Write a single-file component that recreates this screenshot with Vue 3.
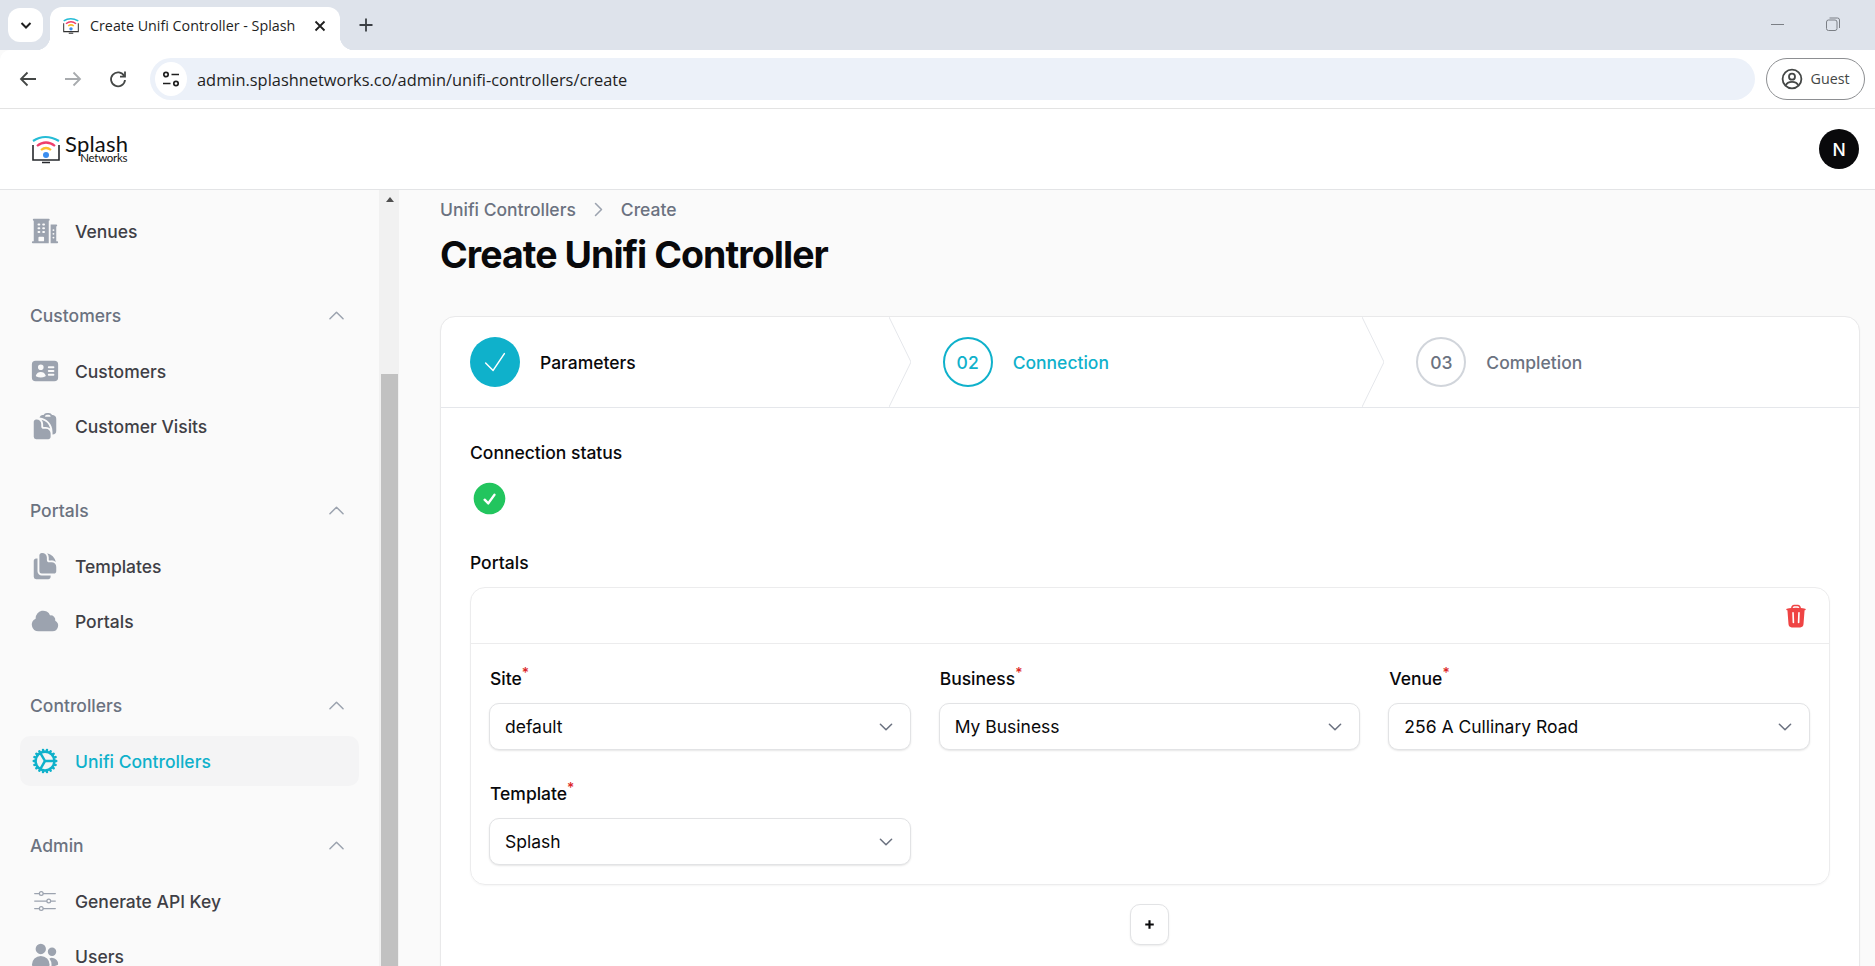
<script setup>
const groups = [
  { items: [{ label: 'Venues', solid: true, d: 'M3 2.25a.75.75 0 0 0 0 1.5v16.5h-.75a.75.75 0 0 0 0 1.5H15v-18a.75.75 0 0 0 0-1.5H3ZM6.75 19.5v-2.25a.75.75 0 0 1 .75-.75h3a.75.75 0 0 1 .75.75v2.25a.75.75 0 0 1-.75.75h-3a.75.75 0 0 1-.75-.75ZM6 6.75A.75.75 0 0 1 6.75 6h.75a.75.75 0 0 1 0 1.5h-.75A.75.75 0 0 1 6 6.75ZM6.75 9a.75.75 0 0 0 0 1.5h.75a.75.75 0 0 0 0-1.5h-.75ZM6 12.75a.75.75 0 0 1 .75-.75h.75a.75.75 0 0 1 0 1.5h-.75a.75.75 0 0 1-.75-.75ZM10.5 6a.75.75 0 0 0 0 1.5h.75a.75.75 0 0 0 0-1.5h-.75Zm-.75 3.75A.75.75 0 0 1 10.5 9h.75a.75.75 0 0 1 0 1.5h-.75a.75.75 0 0 1-.75-.75ZM10.5 12a.75.75 0 0 0 0 1.5h.75a.75.75 0 0 0 0-1.5h-.75ZM16.5 6.75v15h5.25a.75.75 0 0 0 0-1.5H21v-12a.75.75 0 0 0 0-1.5h-4.5Zm1.5 4.5a.75.75 0 0 1 .75-.75h.008a.75.75 0 0 1 .75.75v.008a.75.75 0 0 1-.75.75h-.008a.75.75 0 0 1-.75-.75v-.008Zm.75 2.25a.75.75 0 0 0-.75.75v.008c0 .414.336.75.75.75h.008a.75.75 0 0 0 .75-.75v-.008a.75.75 0 0 0-.75-.75h-.008ZM18 17.25a.75.75 0 0 1 .75-.75h.008a.75.75 0 0 1 .75.75v.008a.75.75 0 0 1-.75.75h-.008a.75.75 0 0 1-.75-.75v-.008Z' }] },
  { title: 'Customers', items: [
    { label: 'Customers', solid: true, d: 'M4.5 3.75a3 3 0 0 0-3 3v10.5a3 3 0 0 0 3 3h15a3 3 0 0 0 3-3V6.75a3 3 0 0 0-3-3h-15Zm4.125 3a2.25 2.25 0 1 0 0 4.5 2.25 2.25 0 0 0 0-4.5Zm-3.873 8.703a4.126 4.126 0 0 1 7.746 0 .75.75 0 0 1-.351.92 7.47 7.47 0 0 1-3.522.877 7.47 7.47 0 0 1-3.522-.877.75.75 0 0 1-.351-.92ZM15 8.25a.75.75 0 0 0 0 1.5h3.75a.75.75 0 0 0 0-1.5H15ZM14.25 12a.75.75 0 0 1 .75-.75h3.75a.75.75 0 0 1 0 1.5H15a.75.75 0 0 1-.75-.75Zm.75 2.25a.75.75 0 0 0 0 1.5h3.75a.75.75 0 0 0 0-1.5H15Z' },
    { label: 'Customer Visits', solid: true, d: 'M17.663 3.118c.225.015.45.032.673.05C19.876 3.298 21 4.604 21 6.109v9.642a3 3 0 0 1-3 3V16.5c0-5.922-4.576-10.775-10.384-11.217.324-1.132 1.3-2.01 2.548-2.114.224-.019.448-.036.673-.051A3 3 0 0 1 13.5 1.5H15a3 3 0 0 1 2.663 1.618ZM12 4.5A1.5 1.5 0 0 1 13.5 3H15a1.5 1.5 0 0 1 1.5 1.5H12ZM3 8.625c0-1.036.84-1.875 1.875-1.875h.375A3.75 3.75 0 0 1 9 10.5v1.875c0 1.036.84 1.875 1.875 1.875h1.875A3.75 3.75 0 0 1 16.5 18v2.625c0 1.035-.84 1.875-1.875 1.875h-9.75A1.875 1.875 0 0 1 3 20.625v-12ZM10.5 10.5a5.23 5.23 0 0 0-1.279-3.434 9.768 9.768 0 0 1 6.963 6.963 5.23 5.23 0 0 0-3.434-1.279h-1.875a.375.375 0 0 1-.375-.375V10.5Z' }
  ] },
  { title: 'Portals', items: [
    { label: 'Templates', solid: true, d: 'M7.5 3.375c0-1.036.84-1.875 1.875-1.875h.375a3.75 3.75 0 0 1 3.75 3.75v1.875C13.5 8.161 14.34 9 15.375 9h1.875A3.75 3.75 0 0 1 21 12.75v3.375C21 17.16 20.16 18 19.125 18h-9.75A1.875 1.875 0 0 1 7.5 16.125V3.375ZM15 5.25a5.23 5.23 0 0 0-1.279-3.434 9.768 9.768 0 0 1 6.963 6.963A5.23 5.23 0 0 0 17.25 7.5h-1.875A.375.375 0 0 1 15 7.125V5.25ZM4.875 6H6v10.125A3.375 3.375 0 0 0 9.375 19.5H16.5v1.125c0 1.035-.84 1.875-1.875 1.875h-9.75A1.875 1.875 0 0 1 3 20.625V7.875C3 6.839 3.84 6 4.875 6Z' },
    { label: 'Portals', solid: true, d: 'M4.5 9.75a6 6 0 0 1 11.573-2.226 3.75 3.75 0 0 1 4.133 4.303A4.5 4.5 0 0 1 18 20.25H6.75a5.25 5.25 0 0 1-2.23-10.004 6.072 6.072 0 0 1-.02-.496Z' }
  ] },
  { title: 'Controllers', items: [
    { label: 'Unifi Controllers', active: true, d: 'M4.5 12a7.5 7.5 0 0 0 15 0m-15 0a7.5 7.5 0 1 1 15 0m-15 0H3m16.5 0H21m-1.5 0H12m-8.457 3.077 1.41-.513m14.095-5.13 1.41-.513M5.106 17.785l1.15-.964m11.49-9.642 1.149-.964M7.501 19.795l.75-1.3m7.5-12.99.75-1.3m-6.063 16.658.26-1.477m2.605-14.772.26-1.477m0 17.726-.26-1.477M10.698 4.614l-.26-1.477M16.5 19.794l-.75-1.299M7.5 4.205 12 12m6.894 5.785-1.149-.964M6.256 7.178l-1.15-.964m15.352 8.864-1.41-.513M4.954 9.435l-1.41-.514M12.002 12l-3.75 6.495' }
  ] },
  { title: 'Admin', items: [
    { label: 'Generate API Key', thin: true, d: 'M10.5 6h9.75M10.5 6a1.5 1.5 0 1 1-3 0m3 0a1.5 1.5 0 1 0-3 0M3.75 6H7.5m3 12h9.75m-9.75 0a1.5 1.5 0 0 1-3 0m3 0a1.5 1.5 0 0 0-3 0m-3.75 0H7.5m9-6h3.75m-3.75 0a1.5 1.5 0 0 1-3 0m3 0a1.5 1.5 0 0 0-3 0m-9.75 0h9.75' },
    { label: 'Users', solid: true, d: 'M4.5 6.375a4.125 4.125 0 1 1 8.25 0 4.125 4.125 0 0 1-8.25 0ZM14.25 8.625a3.375 3.375 0 1 1 6.75 0 3.375 3.375 0 0 1-6.75 0ZM1.5 19.125a7.125 7.125 0 0 1 14.25 0v.003l-.001.119a.75.75 0 0 1-.363.63 13.067 13.067 0 0 1-6.761 1.873c-2.472 0-4.786-.684-6.76-1.873a.75.75 0 0 1-.364-.63l-.001-.122ZM17.25 19.128l-.001.144a2.25 2.25 0 0 1-.233.96 10.088 10.088 0 0 0 5.06-1.01.75.75 0 0 0 .42-.643 4.875 4.875 0 0 0-6.957-4.611 8.586 8.586 0 0 1 1.71 5.157v.003Z' }
  ] }
]
const topFields = [
  { label: 'Site', value: 'default' },
  { label: 'Business', value: 'My Business' },
  { label: 'Venue', value: '256 A Cullinary Road' },
  { label: 'Template', value: 'Splash' }
]
</script>

<template>
  <div class="window">
    <div class="tabstrip">
      <div class="tab-list-btn">
        <svg width="16" height="16" viewBox="0 0 16 16" fill="none" stroke="#1f1f1f" stroke-width="2"><path d="M3.5 6 8 10.5 12.5 6" /></svg>
      </div>
      <div class="tab">
        <svg class="favicon" width="18" height="18" viewBox="0 0 32 32" fill="none">
          <path d="M3 7Q15-1 29 7" stroke="#25bcd6" stroke-width="2.6" />
          <path d="M7 12Q16 5 25 12" stroke="#ef3f6b" stroke-width="2.6" />
          <path d="M11 16Q16 12 21 16" stroke="#fbc02d" stroke-width="2.6" />
          <circle cx="16" cy="21" r="3" fill="#3b8ef0" />
          <path d="M3 11V26H29V11M12 29H20" stroke="#333" stroke-width="1.8" />
        </svg>
        <span class="tab-title">Create Unifi Controller - Splash</span>
        <svg class="tab-close" width="12" height="12" viewBox="0 0 12 12" stroke="#1f1f1f" stroke-width="1.8"><path d="M1.5 1.5l9 9M10.5 1.5l-9 9" /></svg>
      </div>
      <svg class="new-tab" width="16" height="16" viewBox="0 0 16 16" stroke="#3b3f44" stroke-width="1.8"><path d="M8 1.5v13M1.5 8h13" /></svg>
      <div class="win-controls">
        <svg width="13" height="13" viewBox="0 0 13 13" stroke="#7b7f85"><path d="M0 6.5h13" /></svg>
        <svg width="14" height="14" viewBox="0 0 14 14" fill="none" stroke="#7b7f85"><rect x=".5" y="3" width="10.5" height="10.5" rx="2" /><path d="M3.5 1h8a2 2 0 0 1 2 2v8" /></svg>
      </div>
    </div>

    <div class="toolbar">
      <div class="nav-btn">
        <svg width="20" height="20" viewBox="0 0 20 20" fill="none" stroke="#444746" stroke-width="1.8"><path d="M18 10H3M9.5 3.5 3 10l6.5 6.5" /></svg>
      </div>
      <div class="nav-btn">
        <svg width="20" height="20" viewBox="0 0 20 20" fill="none" stroke="#a8abae" stroke-width="1.8"><path d="M2 10h15M10.5 3.5 17 10l-6.5 6.5" /></svg>
      </div>
      <div class="nav-btn">
        <svg width="20" height="20" viewBox="0 0 20 20" fill="none" stroke="#444746" stroke-width="1.8"><path d="M16.2 7A7 7 0 1 0 17 11" /><path d="M17 2.5V7.6H12" /></svg>
      </div>
      <div class="omnibox">
        <div class="site-info">
          <svg width="20" height="20" viewBox="0 0 20 20" fill="none" stroke="#1f1f1f" stroke-width="1.7"><circle cx="5" cy="5.5" r="2.2" /><path d="M10.5 5.5H18M2 14.5h7.5" /><circle cx="15" cy="14.5" r="2.2" /></svg>
        </div>
        <span class="url">admin.splashnetworks.co/admin/unifi-controllers/create</span>
      </div>
      <div class="guest">
        <svg width="22" height="22" viewBox="0 0 22 22" fill="none" stroke="#444746" stroke-width="1.8"><circle cx="11" cy="11" r="9.4" /><circle cx="11" cy="8.7" r="3" /><path d="M4.8 17.4c1-2.6 3.3-3.5 6.2-3.5s5.2.9 6.2 3.5" /></svg>
        <span class="guest-text">Guest</span>
      </div>
    </div>

    <header class="app-header">
      <div class="logo">
        <svg width="32" height="32" viewBox="0 0 32 32" fill="none">
          <path d="M3 7Q15-1 29 7" stroke="#25bcd6" stroke-width="2.2" />
          <path d="M7 12Q16 5 25 12" stroke="#ef3f6b" stroke-width="2.2" />
          <path d="M11 16Q16 12 21 16" stroke="#fbc02d" stroke-width="2.2" />
          <circle cx="16" cy="21" r="3" fill="#3b8ef0" />
          <path d="M3 11V26H29V11M12 28.5H20" stroke="#26282c" stroke-width="1.6" />
        </svg>
        <div class="logo-text">
          <span class="logo-main">Splash</span>
          <span class="logo-sub">Networks</span>
        </div>
      </div>
      <div class="avatar">N</div>
    </header>

    <div class="body">
      <aside class="sidebar">
        <nav class="nav">
          <section v-for="(group, g) in groups" :key="g" class="nav-group">
            <div v-if="group.title" class="group-head">
              <span>{{ group.title }}</span>
              <svg width="21" height="21" viewBox="0 0 24 24" fill="none" stroke="#9ca3af" stroke-width="1.7" stroke-linecap="round" stroke-linejoin="round"><path d="m4.5 15.75 7.5-7.5 7.5 7.5" /></svg>
            </div>
            <a v-for="item in group.items" :key="item.label" class="nav-item" :class="{ active: item.active }">
              <svg v-if="item.solid" class="nav-icon" viewBox="0 0 24 24" fill="#9ca3af"><path fill-rule="evenodd" clip-rule="evenodd" :d="item.d" /></svg>
              <svg v-else class="nav-icon" viewBox="0 0 24 24" fill="none" stroke-linecap="round" stroke-linejoin="round" :stroke="item.active ? '#0fb1cb' : '#9ca3af'" :stroke-width="item.thin ? 1 : 2"><path :d="item.d" /></svg>
              <span>{{ item.label }}</span>
            </a>
          </section>
        </nav>
      </aside>
      <div class="scrollbar">
        <div class="scroll-arrow"></div>
        <div class="scroll-thumb"></div>
      </div>

      <main class="main">
        <div class="crumbs">
          <span>Unifi Controllers</span>
          <svg width="19" height="19" viewBox="0 0 24 24" fill="none" stroke="#9ca3af" stroke-width="2" stroke-linecap="round" stroke-linejoin="round"><path d="m8.25 4.5 7.5 7.5-7.5 7.5" /></svg>
          <span>Create</span>
        </div>
        <h1 class="title">Create Unifi Controller</h1>

        <div class="card">
          <div class="steps">
            <div class="step done">
              <div class="circle">
                <svg width="30" height="30" viewBox="0 0 24 24" fill="none" stroke="#fff" stroke-width="1.2" stroke-linecap="round" stroke-linejoin="round"><path d="m4.5 12.75 6 6 9-13.5" /></svg>
              </div>
              <span>Parameters</span>
              <svg class="sep" width="22" height="90" viewBox="0 0 22 90" fill="none" stroke="#e5e7eb"><path d="M0 0 22 45 0 90" /></svg>
            </div>
            <div class="step current">
              <div class="circle">02</div>
              <span>Connection</span>
              <svg class="sep" width="22" height="90" viewBox="0 0 22 90" fill="none" stroke="#e5e7eb"><path d="M0 0 22 45 0 90" /></svg>
            </div>
            <div class="step todo">
              <div class="circle">03</div>
              <span>Completion</span>
            </div>
          </div>

          <div class="card-body">
            <div class="label">Connection status</div>
            <svg class="status-icon" viewBox="0 0 24 24" fill="#22c55e"><path fill-rule="evenodd" clip-rule="evenodd" d="M2.25 12c0-5.385 4.365-9.75 9.75-9.75s9.75 4.365 9.75 9.75-4.365 9.75-9.75 9.75S2.25 17.385 2.25 12Zm13.36-1.814a.75.75 0 1 0-1.22-.872l-3.236 4.53L9.53 12.22a.75.75 0 0 0-1.06 1.06l2.25 2.25a.75.75 0 0 0 1.14-.094l3.75-5.25Z" /></svg>
            <div class="label">Portals</div>

            <div class="portal">
              <div class="portal-head">
                <svg width="26" height="26" viewBox="0 0 24 24" fill="#ef4444"><path fill-rule="evenodd" clip-rule="evenodd" d="M16.5 4.478v.227a48.816 48.816 0 0 1 3.878.512.75.75 0 1 1-.256 1.478l-.209-.035-1.005 13.07a3 3 0 0 1-2.991 2.77H8.084a3 3 0 0 1-2.991-2.77L4.087 6.66l-.209.035a.75.75 0 0 1-.256-1.478A48.567 48.567 0 0 1 7.5 4.705v-.227c0-1.564 1.213-2.9 2.816-2.951a52.662 52.662 0 0 1 3.369 0c1.603.051 2.815 1.387 2.815 2.951Zm-6.136-1.452a51.196 51.196 0 0 1 3.273 0C14.39 3.05 15 3.684 15 4.478v.113a49.488 49.488 0 0 0-6 0v-.113c0-.794.609-1.428 1.364-1.452Zm-.355 5.945a.75.75 0 1 0-1.5.058l.347 9a.75.75 0 1 0 1.499-.058l-.346-9Zm5.48.058a.75.75 0 1 0-1.498-.058l-.347 9a.75.75 0 0 0 1.5.058l.345-9Z" /></svg>
              </div>
              <div class="portal-grid">
                <div v-for="f in topFields" :key="f.label" class="field">
                  <div class="label field-label">{{ f.label }}<sup class="req">*</sup></div>
                  <div class="select">
                    <span>{{ f.value }}</span>
                    <svg width="28" height="28" viewBox="0 0 20 20" fill="none" stroke="#6b7280" stroke-width="1.1" stroke-linecap="round" stroke-linejoin="round"><path d="m6 8 4 4 4-4" /></svg>
                  </div>
                </div>
              </div>
            </div>

            <div class="add-row">
              <button class="add" type="button">
                <svg width="17" height="17" viewBox="0 0 24 24" fill="none" stroke="#09090b" stroke-width="3"><path d="M12 6v12M6 12h12" /></svg>
              </button>
            </div>
          </div>
        </div>
      </main>
    </div>
  </div>
</template>

<style>
html, body { margin: 0; overflow: hidden; }
</style>

<style scoped>
.window { height: 966px; width: 1875px; display: flex; flex-direction: column; overflow: hidden; background: #fafafa; font-family: Inter, "Liberation Sans", sans-serif; font-size: 17.5px; color: #09090b; }

.tabstrip { height: 50px; flex: none; display: flex; align-items: center; background: #dee3eb; padding-left: 8px; box-sizing: border-box; }
.tab-list-btn { position: relative; z-index: 1; width: 35px; height: 34px; background: #fff; border-radius: 12px; display: flex; align-items: center; justify-content: center; margin-top: -1px; }
.tab { position: relative; align-self: flex-end; margin-left: 7px; width: 290px; height: 43px; background: #fff; border-radius: 12px 12px 0 0; display: flex; align-items: center; box-sizing: border-box; padding: 0 14px 0 12px; }
.tab::before, .tab::after { content: ""; position: absolute; bottom: 0; width: 14px; height: 14px; }
.tab::before { left: -14px; background: radial-gradient(circle at 0 0, #dee3eb 14px, #fff 14.5px); }
.tab::after { right: -14px; background: radial-gradient(circle at 100% 0, #dee3eb 14px, #fff 14.5px); }
.favicon { flex: none; margin-top: -6px; }
.tab-title { margin-left: 10px; font: 14.3px "Open Sans", "Noto Sans", sans-serif; color: #1f1f1f; white-space: nowrap; flex: 1; margin-top: -6px; }
.tab-close { flex: none; margin-top: -6px; }
.new-tab { margin-left: 18px; flex: none; }
.win-controls { margin-left: auto; padding-right: 35px; display: flex; gap: 42px; align-items: center; margin-top: -2px; }

.toolbar { height: 59px; flex: none; box-sizing: border-box; background: #fff; border-bottom: 1px solid #e3e3e3; border-top-left-radius: 10px; display: flex; align-items: center; padding: 0 10px 0 5px; }
.nav-btn { width: 45px; display: flex; justify-content: center; flex: none; }
.omnibox { flex: 1; margin-left: 10px; height: 42px; background: #ecf1f9; border-radius: 21px; display: flex; align-items: center; padding-left: 5px; }
.site-info { width: 32px; height: 34px; border-radius: 50%; background: #fff; display: flex; align-items: center; justify-content: center; }
.url { margin: 1px 0 0 10px; font: 16.4px "Open Sans", "Noto Sans", sans-serif; color: #1f1f1f; white-space: nowrap; }
.guest { margin-left: 11px; width: 99px; height: 42px; box-sizing: border-box; border: 1px solid #8d8f92; border-radius: 21px; display: flex; align-items: center; padding-left: 14px; gap: 7.5px; font: 14.3px "Open Sans", "Noto Sans", sans-serif; color: #444746; }
.guest-text { margin-top: -2px; }

.app-header { height: 81px; flex: none; box-sizing: border-box; background: #fff; border-bottom: 1px solid #e3e4e6; display: flex; align-items: center; justify-content: space-between; padding: 0 16px 0 30px; }
.logo { display: flex; align-items: center; gap: 2px; margin-top: 1px; }
.logo-text { display: flex; flex-direction: column; align-items: flex-end; margin: -3px 0 0 1px; color: #111; font-family: Lato, sans-serif; }
.logo-main { font-size: 22px; line-height: 19px; letter-spacing: 0.2px; }
.logo-sub { font-size: 11.5px; line-height: 9px; margin-top: 0; margin-right: 1px; letter-spacing: -0.3px; }
.avatar { width: 40px; height: 40px; border-radius: 50%; background: #09090b; color: #fff; display: flex; align-items: center; justify-content: center; font-size: 17.5px; font-weight: 450; }

.body { flex: 1; min-height: 0; display: flex; overflow: hidden; }
.sidebar { width: 379px; flex: none; box-sizing: border-box; padding: 16px 20px 0; overflow: hidden; background: #fafafa; }
.nav { display: flex; flex-direction: column; gap: 44px; }
.nav-group { display: flex; flex-direction: column; gap: 5px; }
.group-head { height: 30px; margin-bottom: 11px; display: flex; align-items: center; justify-content: space-between; padding: 0 10px; color: #6b7280; font-weight: 450; }
.group-head svg { margin-right: 2px; }
.nav-item { height: 50px; flex: none; display: flex; align-items: center; gap: 15px; padding: 0 10px; border-radius: 10px; color: #3f3f46; font-weight: 450; }
.nav-item.active { background: #f4f4f5; color: #0fb1cb; }
.nav-icon { width: 30px; height: 30px; flex: none; }

.scrollbar { width: 21px; flex: none; box-sizing: border-box; padding: 0 2px; background: linear-gradient(#f1f1f1, #f1f1f1) left top / 20px 100% no-repeat; }
.scroll-arrow { height: 184px; position: relative; }
.scroll-arrow::after { content: ""; position: absolute; left: 5px; top: 7px; border: 4.5px solid transparent; border-top: 0; border-bottom: 5px solid #505050; }
.scroll-thumb { height: 600px; background: #c1c1c1; width: 17px; }

.main { flex: 1; min-width: 0; box-sizing: border-box; padding: 4px 15px 0 40px; overflow: hidden; }
.crumbs { display: flex; align-items: center; gap: 13px; height: 30px; color: #6b7280; font-weight: 450; }
.title { margin: 8px 0 0; font-size: 37.5px; line-height: 45px; font-weight: 700; letter-spacing: -0.025em; color: #09090b; }

.card { margin-top: 39px; background: #fff; border: 1px solid #e9e9ea; border-radius: 15px; box-shadow: 0 1px 2px rgba(0,0,0,.04); }
.steps { display: grid; grid-template-columns: repeat(3, 1fr); height: 90px; border-bottom: 1px solid #e5e7eb; }
.step { position: relative; display: flex; align-items: center; gap: 20px; padding-left: 29px; font-weight: 450; }
.circle { width: 50px; height: 50px; box-sizing: border-box; border-radius: 50%; display: flex; align-items: center; justify-content: center; flex: none; }
.done .circle { background: #0fb1cb; }
.current { color: #0fb1cb; }
.current .circle { border: 2px solid #0fb1cb; }
.todo { color: #6b7280; padding-left: 30px; }
.todo .circle { border: 2px solid #d1d5db; }
.sep { position: absolute; right: 3px; top: 0; }
.current .sep { right: 2px; }

.card-body { padding: 30px 29px 40px; }
.label { font-weight: 450; line-height: 30px; color: #09090b; }
.req { color: #dc2626; font-size: 14px; line-height: 0; font-weight: 500; }
.status-icon { display: block; width: 39px; height: 39px; margin: 10.5px 0 30.5px 0; }
.portal { margin-top: 9px; border: 1px solid #ececed; border-radius: 15px; box-shadow: 0 1px 2px rgba(0,0,0,.04); }
.portal-head { height: 55px; border-bottom: 1px solid #ececed; display: flex; align-items: center; justify-content: flex-end; padding-right: 20px; }
.portal-grid { display: grid; grid-template-columns: repeat(3, 1fr); gap: 29px 28px; padding: 20px 19px 19px 18px; }
.field { display: flex; flex-direction: column; gap: 9px; }
.field-label { padding-left: 1px; }
.select { height: 47px; box-sizing: border-box; background: #fff; border: 1px solid #e2e3e5; border-radius: 10px; box-shadow: 0 1px 2px rgba(0,0,0,.1); display: flex; align-items: center; justify-content: space-between; padding: 0 10px 0 15px; color: #09090b; }
.add-row { display: flex; justify-content: center; margin-top: 19px; }
.add { width: 39px; height: 41px; margin-right: 2px; padding: 0; background: #fff; border: 1px solid #e2e3e5; border-radius: 10px; box-shadow: 0 1px 2px rgba(0,0,0,.08); display: flex; align-items: center; justify-content: center; }
</style>
